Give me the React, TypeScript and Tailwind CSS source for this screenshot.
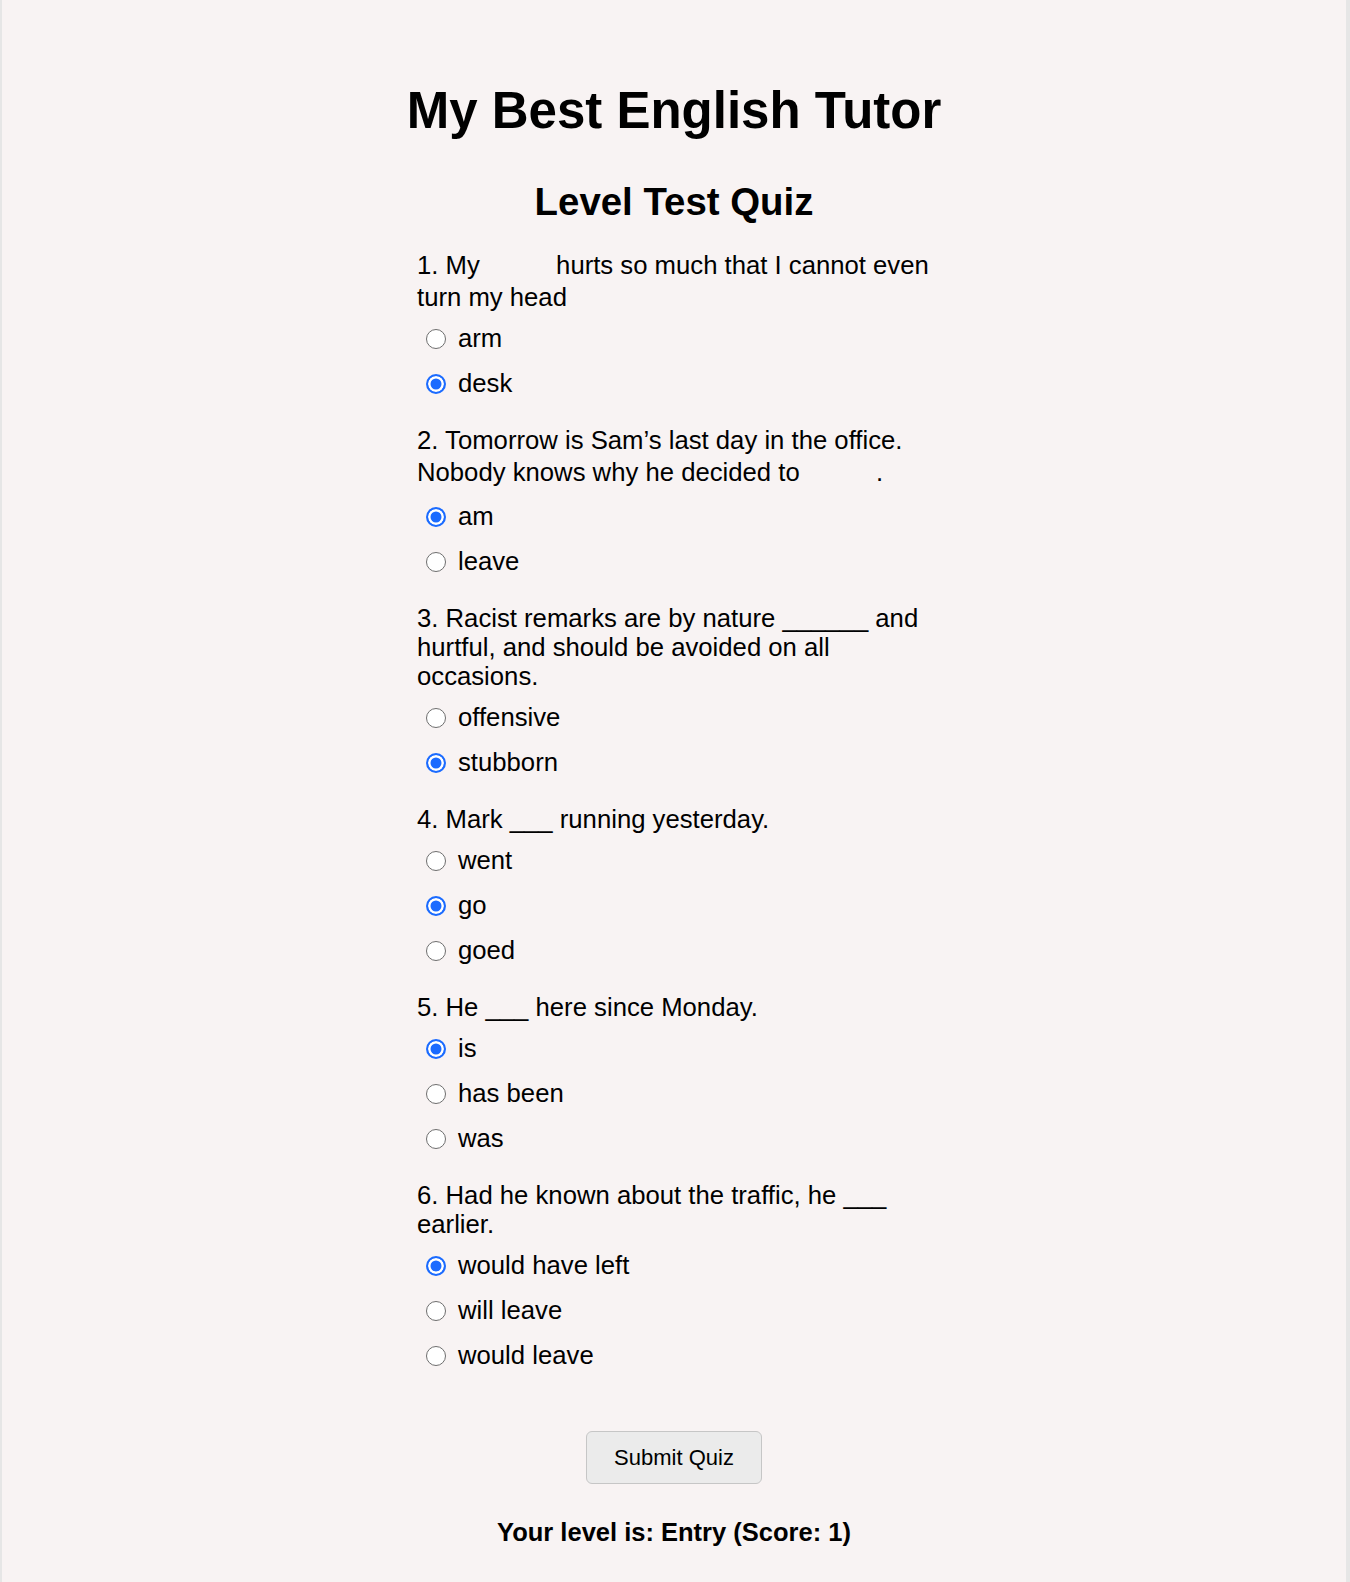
import React, { useState } from "react";

type Question = {
  before: string;
  blank?: boolean;
  after?: string;
  options: string[];
  picked: number;
};

const questions: Question[] = [
  {
    before: "1. My",
    blank: true,
    after: "hurts so much that I cannot even turn my head",
    options: ["arm", "desk"],
    picked: 1,
  },
  {
    before: "2. Tomorrow is Sam’s last day in the office. Nobody knows why he decided to",
    blank: true,
    after: ".",
    options: ["am", "leave"],
    picked: 0,
  },
  {
    before: "3. Racist remarks are by nature ______ and hurtful, and should be avoided on all occasions.",
    options: ["offensive", "stubborn"],
    picked: 1,
  },
  {
    before: "4. Mark ___ running yesterday.",
    options: ["went", "go", "goed"],
    picked: 1,
  },
  {
    before: "5. He ___ here since Monday.",
    options: ["is", "has been", "was"],
    picked: 0,
  },
  {
    before: "6. Had he known about the traffic, he ___ earlier.",
    options: ["would have left", "will leave", "would leave"],
    picked: 0,
  },
];

export default function App() {
  const [answers, setAnswers] = useState<number[]>(questions.map((q) => q.picked));

  const pick = (qi: number, oi: number) => {
    const next = [...answers];
    next[qi] = oi;
    setAnswers(next);
  };

  return (
    <div className="min-h-screen flex bg-[#e6e6e6] font-['Liberation_Sans',Arial,sans-serif] text-black">
      <div className="flex-1 ml-[2px] mr-[4px] bg-[#f8f3f3] pt-[81px] pb-[35px]">
        <h1 className="text-center text-[51px] leading-[59px] font-bold">My Best English Tutor</h1>
        <h2 className="mt-[40px] text-center text-[38.4px] leading-[44px] font-bold">Level Test Quiz</h2>

        <div className="mt-[24px] w-[514px] mx-auto">
          <div className="w-[526px] flex flex-col gap-[20px]">
            {questions.map((q, qi) => (
              <div key={qi}>
                <p className="text-[25.7px] leading-[29px] mb-[4px]">
                  {q.before}
                  {q.blank && (
                    <>
                      {" "}
                      <span className="inline-block w-[62px] h-[35px] align-[-9px]" />{" "}
                    </>
                  )}
                  {q.after}
                </p>
                {q.options.map((opt, oi) => (
                  <label key={oi} className="flex items-center h-[45px] pl-[9px] gap-[12px] cursor-pointer">
                    <input
                      type="radio"
                      name={"q" + qi}
                      checked={answers[qi] === oi}
                      onChange={() => pick(qi, oi)}
                      className="appearance-none shrink-0 w-[20px] h-[20px] m-0 rounded-full border-[1.5px] border-[#6e6e6e] bg-white checked:border-2 checked:border-[#1b6bff] checked:bg-[#1b6bff] checked:shadow-[inset_0_0_0_2.5px_white]"
                    />
                    <span className="text-[25.7px] leading-[29px]">{opt}</span>
                  </label>
                ))}
              </div>
            ))}
          </div>
        </div>

        <div className="mt-[53px] flex justify-center">
          <button className="w-[176px] h-[53px] rounded-[6px] border border-[#c6c6c6] bg-[#ebebeb] text-[22px] leading-[25px]">
            Submit Quiz
          </button>
        </div>

        <p className="mt-[34px] text-center text-[25.5px] leading-[29px] font-bold">Your level is: Entry (Score: 1)</p>
      </div>
    </div>
  );
}
